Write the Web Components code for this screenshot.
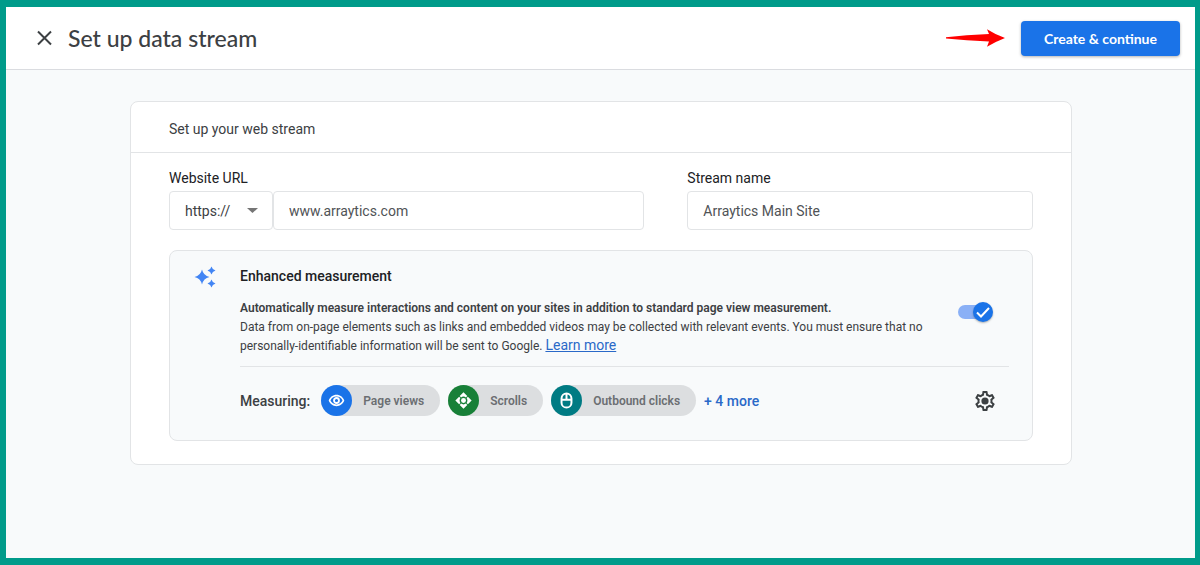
<!DOCTYPE html>
<html lang="en">
<head>
<meta charset="utf-8">
<meta name="viewport" content="width=device-width, initial-scale=1">
<title>Set up data stream</title>
<style>
    :root {
        --teal: #009b8a;
        --blue: #1a73e8;
        --link: #2a69c8;
        --green: #188038;
        --cyan: #007b83;
        --surface: #f8fafb;
        --line: #e2e4e6;
        --text: #3c4043;
        --text-dark: #202124;
        --text-soft: #505356;
    }

    body {
        margin: 0;
        font-family: Roboto, "Liberation Sans", sans-serif;
        font-size: 14px;
        color: var(--text);
    }
</style>
</head>
<body>
<stream-page>
    <top-bar slot="header">Set up data stream</top-bar>
    <stream-card>
        <span slot="title">Set up your web stream</span>
        <stream-fields></stream-fields>
        <enhanced-panel>
            <measure-chip kind="views">Page views</measure-chip>
            <measure-chip kind="scrolls">Scrolls</measure-chip>
            <measure-chip kind="clicks">Outbound clicks</measure-chip>
        </enhanced-panel>
    </stream-card>
</stream-page>

<script>
class StreamPage extends HTMLElement {
    constructor(){
        super();
        this.shadowDOM = this.attachShadow({mode: "open"});
    }

    connectedCallback(){
        this.shadowDOM.innerHTML = `
            <style>
            :host {
                display: flex;
                flex-direction: column;
                box-sizing: border-box;
                min-height: 100vh;
                background-color: var(--surface);
                border: solid var(--teal);
                border-width: 7px 5px 7px 6px;
            }

            main {
                padding: 31px 123px 31px 124px;
            }

            @media(max-width: 900px){
                main {
                    padding: 24px;
                }
            }
            </style>
            <slot name="header"></slot>
            <main><slot></slot></main>
        `;
    }
}

class TopBar extends HTMLElement {
    constructor(){
        super();
        this.shadowDOM = this.attachShadow({mode: "open"});
    }

    connectedCallback(){
        this.shadowDOM.innerHTML = `
            <style>
            :host {
                display: block;
                background-color: #fff;
                border-bottom: 1px solid #dadce0;
            }

            header {
                display: flex;
                align-items: center;
                height: 62px;
                padding: 0 15px 0 26px;
            }

            h1 {
                margin: 0 auto 0 11px;
                font-family: Lato, sans-serif;
                font-size: 23px;
                line-height: 28px;
                font-weight: 500;
            }

            button {
                border: 0;
                cursor: pointer;
            }

            .close {
                display: flex;
                padding: 0;
                background: none;
            }

            .create {
                height: 35px;
                margin-left: 16px;
                padding: 0 23px;
                border-radius: 4px;
                background-color: var(--blue);
                box-shadow: 0 1px 3px rgba(60, 64, 67, .4);
                color: #fff;
                font-family: Lato, sans-serif;
                font-size: 14px;
                font-weight: 700;
            }
            </style>
            <header>
                <button class="close" aria-label="Close">
                    <svg width="25" height="24" viewBox="0 0 25 24" fill="none" stroke="#3c4043" stroke-width="2"><path d="M6 5.500l13 13M19 5.500l-13 13"/></svg>
                </button>
                <h1><slot></slot></h1>
                <svg width="59" height="18" viewBox="0 0 59 18" fill="#f00" aria-hidden="true"><path d="M0 8.200Q20 6 43 5L41 .3Q50 6 59 9Q50 12.500 41 17.700L43 12.500Q20 11.500 0 9.500Z"/></svg>
                <button class="create">Create &amp; continue</button>
            </header>
        `;
    }
}

class StreamCard extends HTMLElement {
    constructor(){
        super();
        this.shadowDOM = this.attachShadow({mode: "open"});
    }

    connectedCallback(){
        this.shadowDOM.innerHTML = `
            <style>
            :host {
                display: block;
                background-color: #fff;
                border: 1px solid var(--line);
                border-radius: 8px;
            }

            h2 {
                margin: 0;
                padding: 17px 38px 13px;
                border-bottom: 1px solid var(--line);
                font-size: 14px;
                line-height: 20px;
                font-weight: 400;
            }

            .content {
                display: flex;
                flex-direction: column;
                gap: 20px;
                padding: 15px 38px 23px;
            }
            </style>
            <h2><slot name="title"></slot></h2>
            <div class="content"><slot></slot></div>
        `;
    }
}

class StreamFields extends HTMLElement {
    constructor(){
        super();
        this.shadowDOM = this.attachShadow({mode: "open"});
    }

    connectedCallback(){
        this.shadowDOM.innerHTML = `
            <style>
            :host {
                display: grid;
                grid-template-columns: 11fr 8fr;
                gap: 43px;
            }

            label {
                display: block;
                margin-bottom: 3px;
                line-height: 20px;
                color: var(--text-dark);
            }

            .row {
                display: flex;
            }

            input, select {
                box-sizing: border-box;
                width: 100%;
                height: 39px;
                margin: 0;
                padding: 0 15px;
                border: 1px solid var(--line);
                border-radius: 4px;
                background-color: #fff;
                color: var(--text-soft);
                font: inherit;
            }

            .protocol {
                display: grid;
                flex: 0 0 104px;
                align-items: center;
            }

            .protocol > * {
                grid-area: 1 / 1;
            }

            .protocol svg {
                justify-self: end;
                margin-right: 15px;
                pointer-events: none;
            }

            select {
                appearance: none;
                color: var(--text);
            }
            </style>
            <div>
                <label for="url">Website URL</label>
                <div class="row">
                    <div class="protocol">
                        <select aria-label="Protocol">
                            <option>https://</option>
                            <option>http://</option>
                        </select>
                        <svg width="11" height="5" viewBox="0 0 11 5" fill="#757575"><path d="M0 0h11L5.500 5z"/></svg>
                    </div>
                    <input id="url" type="text" value="www.arraytics.com">
                </div>
            </div>
            <div>
                <label for="name">Stream name</label>
                <input id="name" type="text" value="Arraytics Main Site">
            </div>
        `;
    }
}

class ToggleSwitch extends HTMLElement {
    constructor(){
        super();
        this.shadowDOM = this.attachShadow({mode: "open"});
    }

    connectedCallback(){
        this.shadowDOM.innerHTML = `
            <style>
            :host {
                display: block;
            }

            label {
                display: grid;
                align-items: center;
                width: 35px;
                height: 20px;
                cursor: pointer;
            }

            label > * {
                grid-area: 1 / 1;
            }

            input {
                appearance: none;
                width: 33px;
                height: 14px;
                margin: 0;
                border-radius: 7px;
                background-color: #bdc1c6;
            }

            input:checked {
                background-color: #8ab0f6;
            }

            svg {
                border-radius: 50%;
                background-color: #80868b;
                box-shadow: 0 1px 2px rgba(60, 64, 67, .4);
                pointer-events: none;
            }

            input:checked + svg {
                justify-self: end;
                background-color: var(--blue);
            }
            </style>
            <label>
                <input type="checkbox" role="switch" aria-label="Enhanced measurement" checked>
                <svg width="20" height="20" viewBox="0 0 20 20" fill="none" stroke="#fff" stroke-width="2"><path d="M4 10.500l4 4 8-8.500"/></svg>
            </label>
        `;
    }
}

class MeasureChip extends HTMLElement {
    constructor(){
        super();
        this.shadowDOM = this.attachShadow({mode: "open"});
    }

    connectedCallback(){
        const kinds = {
            views: {
                color: "var(--blue)",
                icon: `<path fill="#fff" fill-rule="evenodd" d="M12 4C7 4 2.730 7.300 1 12c1.730 4.700 6 8 11 8s9.270-3.300 11-8c-1.730-4.700-6-8-11-8zm0 13.500c-3.790 0-7.170-2.130-8.500-5.500C4.830 8.630 8.210 6.500 12 6.500s7.170 2.130 8.500 5.500c-1.330 3.370-4.710 5.500-8.500 5.500z"/>
                    <circle cx="12" cy="12" r="3.500" fill="none" stroke="#fff" stroke-width="2.600"/>`
            },
            scrolls: {
                color: "var(--green)",
                icon: `<path fill="#fff" d="M12 .500l5.300 5.300-1.800 1.800Q14 6.500 12 6.500T8.500 7.600L6.700 5.800zM12 23.500l5.300-5.300-1.800-1.800Q14 17.500 12 17.500T8.500 16.400L6.700 18.200zM.500 12l5.300-5.300 1.800 1.800Q6.500 10 6.500 12T7.600 15.500L5.800 17.300zM23.500 12l-5.300-5.300-1.800 1.800Q17.500 10 17.500 12T16.400 15.500L18.200 17.300z"/>
                    <circle cx="12" cy="12" r="3.500" fill="#fff"/>`
            },
            clicks: {
                color: "var(--cyan)",
                icon: `<rect x="5" y="2" width="14" height="20" rx="7" fill="none" stroke="#fff" stroke-width="2.800"/>
                    <path d="M5 11h14M12 2v9" fill="none" stroke="#fff" stroke-width="2.800"/>`
            }
        };
        const kind = kinds[this.getAttribute("kind")];

        this.shadowDOM.innerHTML = `
            <style>
            :host {
                display: flex;
                align-items: center;
                gap: 11px;
                padding-right: 16px;
                border-radius: 16px;
                background-color: #dcdee0;
                color: #6b6e72;
                font-size: 12px;
                font-weight: 600;
                white-space: nowrap;
            }

            .icon {
                display: flex;
                align-items: center;
                justify-content: center;
                width: 31px;
                height: 31px;
                border-radius: 50%;
                background-color: ${kind.color};
            }
            </style>
            <span class="icon"><svg width="17" height="17" viewBox="0 0 24 24">${kind.icon}</svg></span>
            <span><slot></slot></span>
        `;
    }
}

class EnhancedPanel extends HTMLElement {
    constructor(){
        super();
        this.shadowDOM = this.attachShadow({mode: "open"});
    }

    connectedCallback(){
        this.shadowDOM.innerHTML = `
            <style>
            :host {
                display: flex;
                align-items: flex-start;
                gap: 24px;
                padding: 15px 23px 24px 24px;
                border: 1px solid var(--line);
                border-radius: 8px;
                background-color: var(--surface);
            }

            .body {
                flex: 1;
            }

            h3 {
                margin: 0;
                color: var(--text-dark);
                font-size: 14px;
                line-height: 20px;
                font-weight: 500;
            }

            .about {
                display: flex;
                align-items: flex-start;
                justify-content: space-between;
                gap: 16px;
                margin-top: 13px;
                padding: 0 16px 10px 0;
                border-bottom: 1px solid var(--line);
            }

            p {
                margin: 0;
                max-width: 700px;
                font-size: 12px;
                line-height: 19px;
            }

            strong {
                display: block;
                font-weight: 600;
            }

            p a {
                font-size: 14px;
                line-height: 14px;
            }

            a {
                color: var(--link);
            }

            toggle-switch {
                margin-top: 3px;
            }

            .measuring {
                display: flex;
                align-items: center;
                gap: 8px;
                padding: 18px 12px 0 0;
            }

            .caption {
                margin-right: 3px;
                font-weight: 500;
            }

            .more {
                font-weight: 500;
                text-decoration: none;
            }

            .settings {
                display: flex;
                margin: 0 0 0 auto;
                padding: 0;
                border: 0;
                background: none;
                cursor: pointer;
            }
            </style>
            <svg width="22" height="22" viewBox="0 0 22 22" fill="#4285f4" aria-hidden="true">
                <path d="M8 3.500Q9.400 9.600 15.500 11Q9.400 12.400 8 18.500Q6.600 12.400 .500 11Q6.600 9.600 8 3.500z"/>
                <path d="M17.500 .500Q18.300 3.700 21.500 4.500Q18.300 5.300 17.500 8.500Q16.700 5.300 13.500 4.500Q16.700 3.700 17.500 .500z"/>
                <path d="M17.500 13.500Q18.300 16.700 21.500 17.500Q18.300 18.300 17.500 21.500Q16.700 18.300 13.500 17.500Q16.700 16.700 17.500 13.500z"/>
            </svg>
            <div class="body">
                <h3>Enhanced measurement</h3>
                <div class="about">
                    <p>
                        <strong>Automatically measure interactions and content on your sites in addition to standard page view measurement.</strong>
                        Data from on-page elements such as links and embedded videos may be collected with relevant events. You must ensure that no personally-identifiable information will be sent to Google. <a href="#learn">Learn more</a>
                    </p>
                    <toggle-switch></toggle-switch>
                </div>
                <div class="measuring">
                    <span class="caption">Measuring:</span>
                    <slot></slot>
                    <a class="more" href="#more">+ 4 more</a>
                    <button class="settings" aria-label="Settings">
                        <svg width="24" height="24" viewBox="0 0 24 24" fill="#3c4043">
                            <path d="M19.430 12.980c.04-.32.07-.64.07-.98 0-.34-.03-.66-.07-.98l2.110-1.650c.19-.15.24-.42.12-.64l-2-3.460a.5.5 0 0 0-.61-.22l-2.490 1c-.52-.4-1.080-.73-1.690-.98l-.38-2.650A.488.488 0 0 0 14 2h-4c-.25 0-.46.18-.49.42l-.38 2.650c-.61.25-1.170.59-1.690.98l-2.490-1a.566.566 0 0 0-.18-.03c-.17 0-.34.09-.43.25l-2 3.460c-.13.22-.07.49.12.64l2.110 1.650c-.04.32-.07.65-.07.98 0 .33.03.66.07.98l-2.110 1.650c-.19.15-.24.42-.12.64l2 3.460a.5.5 0 0 0 .61.22l2.490-1c.52.4 1.080.73 1.690.98l.38 2.650c.03.24.24.42.49.42h4c.25 0 .46-.18.49-.42l.38-2.650c.61-.25 1.170-.59 1.690-.98l2.490 1c.06.02.12.03.18.03.17 0 .34-.09.43-.25l2-3.460c.12-.22.07-.49-.12-.64l-2.110-1.650zm-1.980-1.710c.04.31.05.52.05.73 0 .21-.02.43-.05.73l-.14 1.130.89.7 1.080.84-.7 1.210-1.270-.51-1.040-.42-.9.68c-.43.32-.84.56-1.250.73l-1.060.43-.16 1.130-.2 1.350h-1.400l-.19-1.350-.16-1.130-1.060-.43c-.43-.18-.83-.41-1.230-.71l-.91-.7-1.060.43-1.270.51-.7-1.210 1.080-.84.89-.7-.14-1.130c-.03-.31-.05-.54-.05-.74s.02-.43.05-.73l.14-1.130-.89-.7-1.080-.84.7-1.210 1.270.51 1.040.42.9-.68c.43-.32.84-.56 1.250-.73l1.060-.43.16-1.130.2-1.350h1.390l.19 1.350.16 1.130 1.060.43c.43.18.83.41 1.230.71l.91.7 1.060-.43 1.270-.51.7 1.210-1.070.85-.89.7.14 1.130z"/>
                            <circle cx="12" cy="12" r="3.600"/>
                        </svg>
                    </button>
                </div>
            </div>
        `;
    }
}

customElements.define("stream-page", StreamPage);
customElements.define("top-bar", TopBar);
customElements.define("stream-card", StreamCard);
customElements.define("stream-fields", StreamFields);
customElements.define("toggle-switch", ToggleSwitch);
customElements.define("measure-chip", MeasureChip);
customElements.define("enhanced-panel", EnhancedPanel);
</script>
</body>
</html>
